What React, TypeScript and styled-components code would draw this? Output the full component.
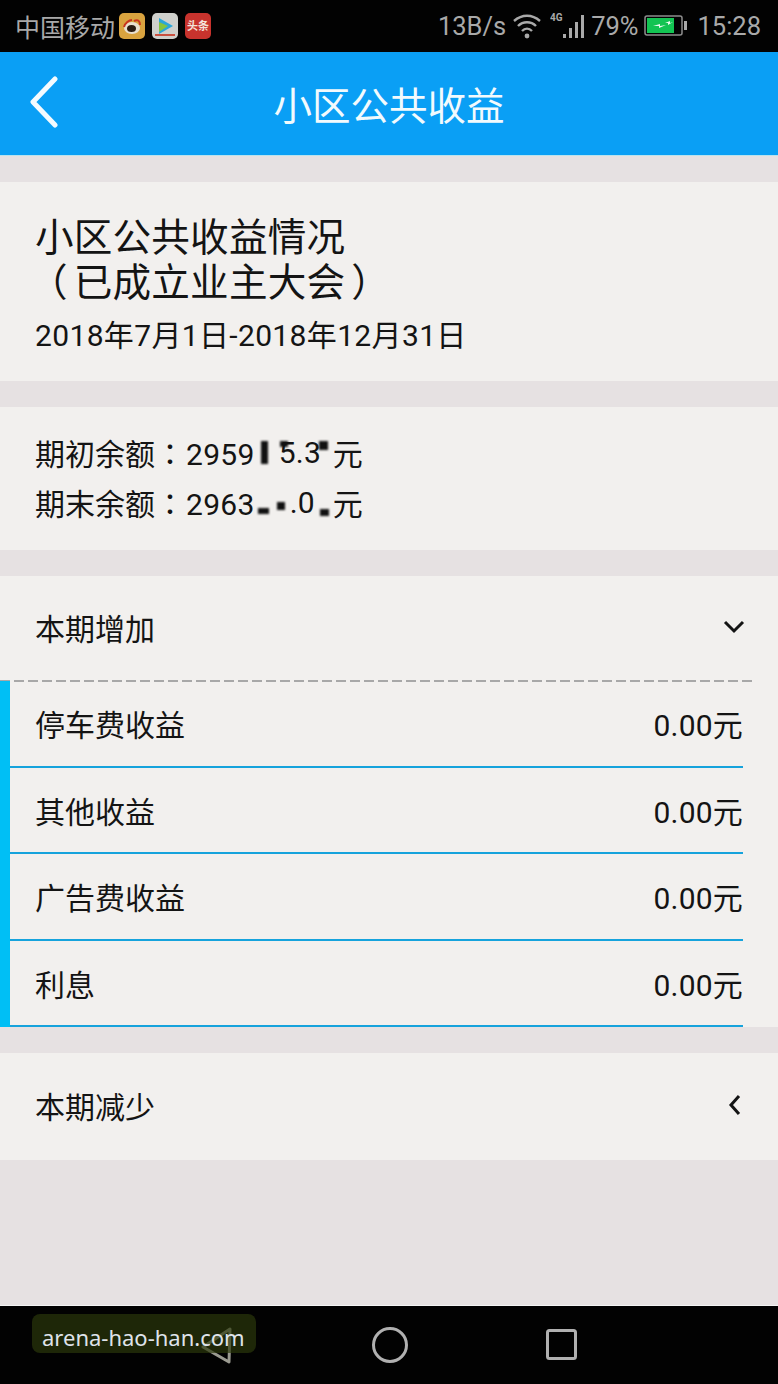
import React, { FC, ReactElement } from 'react';
import styled, { createGlobalStyle } from 'styled-components';

const CJK = `Roboto, "Noto Sans CJK SC", sans-serif`;

const GlobalStyle = createGlobalStyle`
    html, body {
        margin: 0;
        padding: 0;
        background: #e6e1e2;
    }
`;

const Screen = styled.div`
    width: 778px;
    height: 1384px;
    display: flex;
    flex-direction: column;
    overflow: hidden;
    background: #e6e1e2;
    color: #141414;
    font-family: ${CJK};
`;

const StatusBar = styled.div`
    height: 52px;
    flex: none;
    background: #020202;
    color: #a9a9a9;
    display: flex;
    align-items: center;
    justify-content: space-between;
    padding: 0 17px 0 15px;
    font-size: 25.5px;
`;

const StatusGroup = styled.div`
    display: flex;
    align-items: center;
`;

const Carrier = styled.span`
    margin-right: 4px;
    font-size: 25px;
`;

const AppIcon = styled.div<{ $bg: string; $gap?: number }>`
    width: 26px;
    height: 26px;
    margin-right: ${({ $gap }) => $gap ?? 7}px;
    border-radius: 5px;
    background: ${({ $bg }) => $bg};
    display: flex;
    align-items: center;
    justify-content: center;
    overflow: hidden;
`;

const NewsLabel = styled.span`
    color: #f3e2d8;
    font-size: 11px;
    font-weight: 700;
    line-height: 1;
`;

const StatusIcon = styled.svg<{ $ml: number }>`
    margin-left: ${({ $ml }) => $ml}px;
    flex: none;
`;

const StatusText = styled.span<{ $ml?: number }>`
    margin-left: ${({ $ml }) => $ml ?? 0}px;
`;

const Header = styled.header`
    height: 103px;
    flex: none;
    background: #0a9ff5;
    border-bottom: 1px solid #b9e3ee;
    color: #f2fafd;
    display: flex;
    align-items: center;
    justify-content: center;
    position: relative;
`;

const HeaderTitle = styled.h1`
    margin: 0;
    font-size: 38.5px;
    font-weight: 400;
    line-height: 1;
    font-family: "Noto Sans CJK SC", sans-serif;
`;

const BackIcon = styled.svg`
    position: absolute;
    left: 28px;
    top: 24px;
`;

const Body = styled.main`
    flex: 1;
    display: flex;
    flex-direction: column;
    gap: 26px;
    padding-top: 26px;
`;

const Card = styled.section`
    background: #f2f0ee;
`;

const TitleCard = styled(Card)`
    height: 199px;
    padding: 30px 35px 0;
    box-sizing: border-box;
`;

const SummaryTitle = styled.h2`
    margin: 0;
    font-size: 38.6px;
    font-weight: 400;
    line-height: 45px;
    letter-spacing: 0.2px;
    font-family: "Noto Sans CJK SC", sans-serif;
`;

const OpenBracket = styled.span`
    margin: 0 6px 0 -6px;
`;

const CloseBracket = styled.span`
    margin-left: 6px;
`;

// the traditional colon sits centred in its cell, as in the picture
const Colon = styled.span`
    font-family: "Noto Sans CJK TC", sans-serif;
`;

const Period = styled.p`
    margin: 14px 0 0;
    font-size: 30px;
    line-height: 40px;
    letter-spacing: 0.35px;
`;

const BalanceCard = styled(Card)`
    height: 143px;
    padding: 23px 35px 0;
    box-sizing: border-box;
`;

const BalanceRow = styled.p`
    margin: 0 0 5px;
    height: 45px;
    line-height: 45px;
    font-size: 30px;
    white-space: nowrap;
`;

const Amount = styled.span`
    margin-left: 1px;
    letter-spacing: 0.3px;
`;

const Masked = styled.span`
    display: inline-block;
    vertical-align: top;
    width: 78px;
    height: 45px;
    position: relative;
`;

const MaskedDigits = styled.span<{ $x: number }>`
    position: absolute;
    left: ${({ $x }) => $x}px;
    top: 0;
    letter-spacing: 0.3px;
`;

const Smudge = styled.i<{ $x: number; $y: number; $w: number; $h: number }>`
    position: absolute;
    left: ${({ $x }) => $x}px;
    top: ${({ $y }) => $y}px;
    width: ${({ $w }) => $w}px;
    height: ${({ $h }) => $h}px;
    background: #111;
    filter: blur(1px);
`;

const AccordionHead = styled.div<{ $h: number; $shift: number }>`
    height: ${({ $h }) => $h}px;
    box-sizing: border-box;
    display: flex;
    align-items: center;
    justify-content: space-between;
    padding: 0 ${({ $shift }) => $shift}px 3px 35px;
    font-size: 30px;
`;

const DashedLine = styled.div`
    width: 752px;
    height: 2px;
    background: repeating-linear-gradient(to right, #a8a8a8 0 10px, transparent 10px 14px);
`;

const RowList = styled.div`
    border-left: 10px solid #00bff5;
    padding-right: 35px;
    margin-top: -1px;
`;

const Row = styled.div`
    height: 84.5px;
    border-bottom: 2px solid #16a3dc;
    display: flex;
    align-items: center;
    justify-content: space-between;
    padding-left: 25px;
    font-size: 30px;
`;

const RowValue = styled.span`
    letter-spacing: 0.2px;
`;

const NavBar = styled.nav`
    height: 79px;
    flex: none;
    background: #020202;
    border-top: 1px solid #f4f4f4;
    box-sizing: border-box;
    position: relative;
    display: flex;
    align-items: center;
`;

const NavIcon = styled.svg<{ $ml: number }>`
    margin-left: ${({ $ml }) => $ml}px;
    margin-top: -1px;
    flex: none;
`;

const Watermark = styled.div`
    position: absolute;
    left: 32px;
    top: 8px;
    width: 224px;
    height: 39px;
    border-radius: 8px;
    background: rgba(44, 58, 12, 0.68);
    color: #dfe3ea;
    font-family: "Noto Sans", sans-serif;
    font-size: 22px;
    line-height: 47px;
    padding-left: 10px;
    box-sizing: border-box;
    white-space: nowrap;
`;

const rows = ['停车费收益', '其他收益', '广告费收益', '利息'];

const App: FC = (): ReactElement => (
    <Screen>
        <GlobalStyle />
        <StatusBar>
            <StatusGroup>
                <Carrier>中国移动</Carrier>
                <AppIcon $bg="#d9a33f">
                    <svg width="22" height="22" viewBox="0 0 22 22">
                        <ellipse cx="11" cy="13" rx="8" ry="6" fill="#e9e0d0" />
                        <ellipse cx="10.5" cy="13.5" rx="4.5" ry="3.5" fill="#2b1c12" />
                        <path d="M13 6c4-2 6 0 6 4" fill="none" stroke="#c8341e" strokeWidth="2" />
                        <path d="M3 12c1-4 5-7 8-7" fill="none" stroke="#c8341e" strokeWidth="2" />
                    </svg>
                </AppIcon>
                <AppIcon $bg="#cfd0cc">
                    <svg width="24" height="24" viewBox="0 0 24 24">
                        <path d="M6 4l14 8-14 8z" fill="#2aa6d8" />
                        <path d="M6 8l9 4-9 6z" fill="#83c43e" />
                        <path d="M2 21h20" stroke="#c85040" strokeWidth="2" />
                    </svg>
                </AppIcon>
                <AppIcon $bg="#c8332d" $gap={0}>
                    <NewsLabel>头条</NewsLabel>
                </AppIcon>
            </StatusGroup>
            <StatusGroup>
                <StatusText>13B/s</StatusText>
                <StatusIcon $ml={6} width="30" height="26" viewBox="0 0 30 26">
                    <g fill="none" stroke="#a9a9a9" strokeWidth="2.4">
                        <path d="M2 8c8-7 18-7 26 0" />
                        <path d="M6 13c5-5 13-5 18 0" />
                        <path d="M10 18c3-3 7-3 10 0" />
                    </g>
                    <circle cx="15" cy="23" r="2.4" fill="#a9a9a9" />
                </StatusIcon>
                <StatusIcon $ml={8} width="38" height="28" viewBox="0 0 38 28">
                    <text x="0" y="9" fontSize="10" fontWeight="700" fill="#a9a9a9" fontFamily="Roboto, sans-serif">4G</text>
                    <g fill="#a9a9a9">
                        <rect x="13" y="22" width="3" height="4" />
                        <rect x="19" y="16" width="3" height="10" />
                        <rect x="25" y="10" width="3" height="16" />
                        <rect x="31" y="3" width="3" height="23" />
                    </g>
                </StatusIcon>
                <StatusText $ml={3}>79%</StatusText>
                <StatusIcon $ml={6} width="44" height="22" viewBox="0 0 44 22">
                    <rect x="1" y="1" width="37" height="19" rx="2" fill="none" stroke="#8d8d8d" strokeWidth="1.5" />
                    <rect x="3" y="3" width="27" height="15" fill="#12c452" />
                    <rect x="40" y="6" width="3" height="9" fill="#a9a9a9" />
                    <path d="M9 11l7-2v2l6-1-7 3v-2zM21 8l5-2v2l3-1-5 3V8z" fill="#e9f8ee" />
                </StatusIcon>
                <StatusText $ml={9}>15:28</StatusText>
            </StatusGroup>
        </StatusBar>
        <Header>
            <BackIcon width="34" height="54" viewBox="0 0 34 54">
                <path d="M27 3L5 26l22 23" fill="none" stroke="#f4fbff" strokeWidth="5" strokeLinecap="round" strokeLinejoin="round" />
            </BackIcon>
            <HeaderTitle>小区公共收益</HeaderTitle>
        </Header>
        <Body>
            <TitleCard>
                <SummaryTitle>小区公共收益情况</SummaryTitle>
                <SummaryTitle>
                    <OpenBracket>（</OpenBracket>已成立业主大会<CloseBracket>）</CloseBracket>
                </SummaryTitle>
                <Period>2018年7月1日-2018年12月31日</Period>
            </TitleCard>
            <BalanceCard>
                <BalanceRow>
                    期初余额<Colon>：</Colon>
                    <Amount>2959</Amount>
                    <Masked>
                        <MaskedDigits $x={24}>5.3</MaskedDigits>
                        <Smudge $x={6} $y={11} $w={7} $h={23} />
                        <Smudge $x={25} $y={11} $w={8} $h={6} />
                        <Smudge $x={64} $y={11} $w={9} $h={9} />
                    </Masked>
                    元
                </BalanceRow>
                <BalanceRow>
                    期末余额<Colon>：</Colon>
                    <Amount>2963</Amount>
                    <Masked>
                        <MaskedDigits $x={35}>.0</MaskedDigits>
                        <Smudge $x={3} $y={28} $w={11} $h={6} />
                        <Smudge $x={22} $y={22} $w={8} $h={8} />
                        <Smudge $x={65} $y={29} $w={9} $h={7} />
                    </Masked>
                    元
                </BalanceRow>
            </BalanceCard>
            <Card>
                <AccordionHead $h={104} $shift={33}>
                    本期增加
                    <svg width="22" height="14" viewBox="0 0 22 14">
                        <path d="M2 2l9 9 9-9" fill="none" stroke="#141414" strokeWidth="3" />
                    </svg>
                </AccordionHead>
                <DashedLine />
                <RowList>
                    {rows.map((label) => (
                        <Row key={label}>
                            <span>{label}</span>
                            <RowValue>0.00元</RowValue>
                        </Row>
                    ))}
                </RowList>
            </Card>
            <Card>
                <AccordionHead $h={107} $shift={36}>
                    本期减少
                    <svg width="14" height="22" viewBox="0 0 14 22">
                        <path d="M11 2l-8 9 8 9" fill="none" stroke="#141414" strokeWidth="3" />
                    </svg>
                </AccordionHead>
            </Card>
        </Body>
        <NavBar>
            <NavIcon $ml={199} width="34" height="38" viewBox="0 0 34 38">
                <path d="M31 3L4 21l26 15z" fill="none" stroke="#9a9a90" strokeWidth="3" strokeLinejoin="round" />
            </NavIcon>
            <NavIcon $ml={138} width="38" height="38" viewBox="0 0 38 38">
                <circle cx="19" cy="19" r="16.5" fill="none" stroke="#b0b0b0" strokeWidth="3" />
            </NavIcon>
            <NavIcon $ml={137} width="31" height="31" viewBox="0 0 31 31">
                <rect x="1.5" y="1.5" width="28" height="28" rx="2" fill="none" stroke="#b0b0b0" strokeWidth="3" />
            </NavIcon>
            <Watermark>arena-hao-han.com</Watermark>
        </NavBar>
    </Screen>
);

export default App;
